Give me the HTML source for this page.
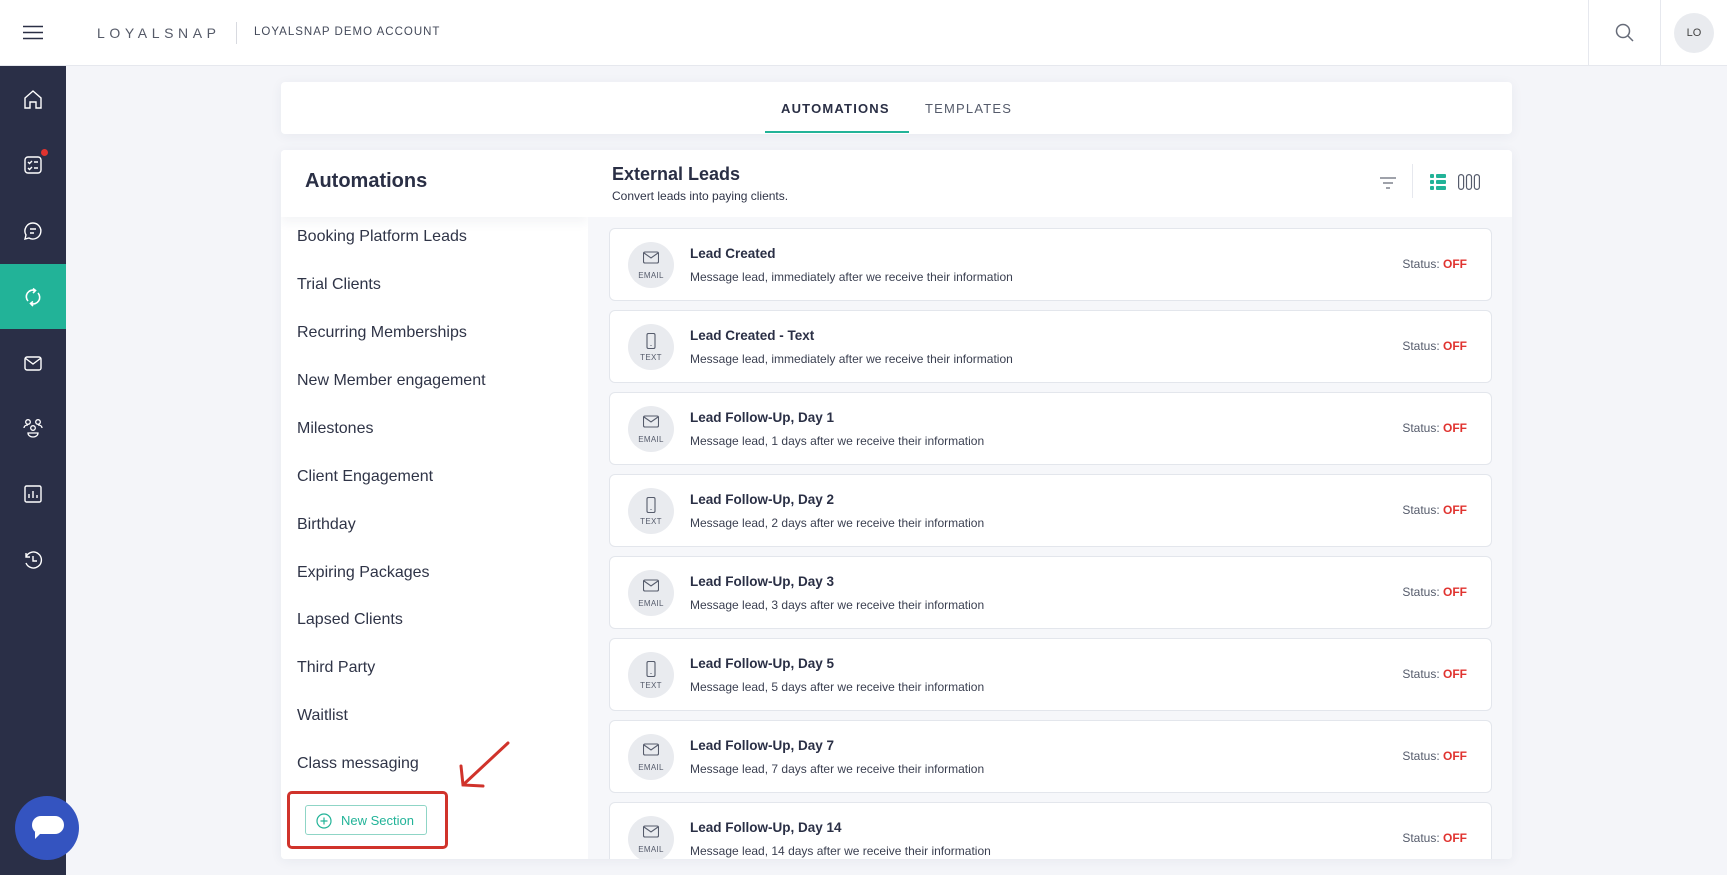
<!DOCTYPE html>
<html><head><meta charset="utf-8"><style>
*{box-sizing:border-box;margin:0;padding:0}
body{width:1727px;height:875px;overflow:hidden;background:#f4f5f9;font-family:"Liberation Sans",sans-serif;color:#2a2f45;position:relative}
.hdr{position:absolute;left:0;top:0;width:1727px;height:66px;background:#fff;border-bottom:1px solid #e6e8ee}
.side{position:absolute;left:0;top:66px;width:66px;height:809px;background:#2a2f47}
.side svg{position:absolute;left:22px}
.abs{position:absolute}
.card{position:absolute;background:#fff;border-radius:4px;box-shadow:0 2px 12px rgba(40,50,90,.06)}
.item{position:absolute;left:16px;font-size:16px;color:#2f3447}
.row{position:absolute;left:21px;width:883px;height:73px;background:#fff;border:1px solid #e3e6ec;border-radius:6px}
.circ{position:absolute;left:18px;top:13px;width:46px;height:46px;border-radius:50%;background:#e9ebef}
.circ span{position:absolute;left:0;width:46px;text-align:center;top:29px;font-size:8px;color:#555b6b;letter-spacing:.3px}
.circ svg{position:absolute;left:15px;top:9px}
.t{position:absolute;left:80px;top:17px;font-size:13.5px;font-weight:bold;color:#2a2f45}
.d{position:absolute;left:80px;top:41px;font-size:12px;color:#3a3f50}
.st{position:absolute;right:24px;top:28px;font-size:12px;color:#555b6b}
.st b{color:#e0332f}
</style></head><body>
<div class="hdr">
 <svg class="abs" style="left:23px;top:25px" width="20" height="15"><path d="M0 1.5H20M0 7.5H20M0 13.5H20" stroke="#2a2f45" stroke-width="1.6"/></svg>
 <div class="abs" style="left:97px;top:25px;font-size:14px;letter-spacing:4.6px;color:#555a68">LOYALSNAP</div>
 <div class="abs" style="left:236px;top:22px;width:1px;height:22px;background:#d8dae0"></div>
 <div class="abs" style="left:254px;top:26px;font-size:11.5px;letter-spacing:1px;color:#444a5a">LOYALSNAP DEMO ACCOUNT</div>
 <div class="abs" style="left:1588px;top:0;width:1px;height:66px;background:#e6e8ee"></div>
 <svg class="abs" style="left:1615px;top:23px" width="20" height="20"><circle cx="8" cy="8" r="6.5" fill="none" stroke="#666b78" stroke-width="1.5"/><path d="M13 13L18 18" stroke="#666b78" stroke-width="1.5"/></svg>
 <div class="abs" style="left:1660px;top:0;width:1px;height:66px;background:#e6e8ee"></div>
 <div class="abs" style="left:1674px;top:13px;width:40px;height:40px;border-radius:50%;background:#e9ebef;font-size:11px;text-align:center;line-height:40px;color:#444">LO</div>
</div>
<div class="side">
 <svg style="top:22px" width="22" height="22" fill="none" stroke="#fff" stroke-width="1.4"><path d="M3 10L11 3L19 10V20H14V14H8V20H3Z"/></svg>
 <svg style="top:88px" width="22" height="22" fill="none" stroke="#fff" stroke-width="1.4"><rect x="3" y="3" width="16" height="16" rx="3"/><path d="M6 8l1.5 1.5L10 7M12 8h4M6 14l1.5 1.5L10 13M12 14h4"/></svg>
 <div class="abs" style="left:41px;top:83px;width:7px;height:7px;border-radius:50%;background:#e0332f"></div>
 <svg style="top:154px" width="22" height="22" fill="none" stroke="#fff" stroke-width="1.4"><path d="M11 3a8 8 0 1 1-4 15L3 19l1-4A8 8 0 0 1 11 3z"/><path d="M8 9h6M8 13h4"/></svg>
 <div class="abs" style="left:0;top:198px;width:66px;height:65px;background:#22b398"></div>
 <svg style="top:220px" width="22" height="22" fill="none" stroke="#fff" stroke-width="1.6"><path d="M6 15A6.5 6.5 0 0 1 13 4.5M16 7A6.5 6.5 0 0 1 9 17.5"/><path d="M11 2.5l2.5 2-2.5 2.5M11 15.5l-2.5 2 2.5 2.5"/></svg>
 <svg style="top:286px" width="22" height="22" fill="none" stroke="#fff" stroke-width="1.4"><rect x="3" y="5" width="16" height="13" rx="2"/><path d="M3 6l8 6 8-6"/></svg>
 <svg style="top:351px" width="22" height="22" fill="none" stroke="#fff" stroke-width="1.3"><circle cx="6" cy="5" r="2.3"/><circle cx="16" cy="5" r="2.3"/><circle cx="11" cy="11" r="2.3"/><path d="M2 11c0-2 2-3 4-3M20 11c0-2-2-3-4-3M6 16h10a5 4 0 0 1-10 0z"/></svg>
 <svg style="top:417px" width="22" height="22" fill="none" stroke="#fff" stroke-width="1.4"><rect x="3" y="3" width="16" height="16" rx="1.5"/><path d="M7 15v-4M11 15v-7M15 15v-3"/></svg>
 <svg style="top:483px" width="22" height="22" fill="none" stroke="#fff" stroke-width="1.4"><path d="M4 8A8 8 0 1 1 4 14M4 4v4h4M11 7v5h4"/></svg>
</div>
<div class="abs" style="left:15px;top:796px;width:64px;height:64px;border-radius:50%;background:#3454c0"></div>
<div class="abs" style="left:32px;top:816px;width:32px;height:18px;border-radius:9px;background:#fff"></div>
<svg class="abs" style="left:35px;top:832px" width="8" height="8"><path d="M0 0H7L0 7Z" fill="#fff"/></svg>

<div class="card" style="left:281px;top:82px;width:1231px;height:52px">
 <div class="abs" style="left:500px;top:19px;font-size:13px;font-weight:bold;letter-spacing:1.2px;color:#2a2f45">AUTOMATIONS</div>
 <div class="abs" style="left:484px;top:49px;width:144px;height:2px;background:#22b398"></div>
 <div class="abs" style="left:644px;top:19px;font-size:13px;letter-spacing:1.2px;color:#555b6b">TEMPLATES</div>
</div>

<div class="card" style="left:281px;top:150px;width:1231px;height:709px;overflow:hidden">
 <div class="abs" style="left:0;top:0;width:307px;height:709px;background:#fff">
  <div class="abs" style="left:0;top:0;width:307px;height:67px;box-shadow:0 6px 10px rgba(40,50,90,.05);background:#fff"></div>
  <div class="abs" style="left:24px;top:20px;font-size:20px;font-weight:bold;color:#2a2f45">Automations</div>
  <div class="item" style="top:78px">Booking Platform Leads</div>
  <div class="item" style="top:126px">Trial Clients</div>
  <div class="item" style="top:174px">Recurring Memberships</div>
  <div class="item" style="top:222px">New Member engagement</div>
  <div class="item" style="top:270px">Milestones</div>
  <div class="item" style="top:318px">Client Engagement</div>
  <div class="item" style="top:366px">Birthday</div>
  <div class="item" style="top:414px">Expiring Packages</div>
  <div class="item" style="top:461px">Lapsed Clients</div>
  <div class="item" style="top:509px">Third Party</div>
  <div class="item" style="top:557px">Waitlist</div>
  <div class="item" style="top:605px">Class messaging</div>
  <div class="abs" style="left:24px;top:655px;width:122px;height:30px;border:1px solid #8fd5c6;border-radius:3px;color:#22b398;font-size:13px">
   <svg class="abs" style="left:10px;top:7px" width="16" height="16" fill="none" stroke="#22b398" stroke-width="1.2"><circle cx="8" cy="8" r="7"/><path d="M8 4.5v7M4.5 8h7"/></svg>
   <span class="abs" style="left:35px;top:7px">New Section</span>
  </div>
  <div class="abs" style="left:6px;top:641px;width:161px;height:58px;border:3px solid #d0332b;border-radius:5px"></div>
 </div>
 <div class="abs" style="left:307px;top:0;width:924px;height:709px;background:#f6f7fa">
  <div class="abs" style="left:0;top:0;width:924px;height:67px;background:#fff"></div>
  <div class="abs" style="left:24px;top:14px;font-size:18px;font-weight:bold;color:#2a2f45">External Leads</div>
  <div class="abs" style="left:24px;top:39px;font-size:12px;color:#2f3447">Convert leads into paying clients.</div>
  <svg class="abs" style="left:792px;top:26px" width="16" height="14" stroke="#666b78" stroke-width="1.3"><path d="M0 2H16M3 7H13M6 12H10"/></svg>
  <div class="abs" style="left:824px;top:14px;width:1px;height:34px;background:#e6e8ee"></div>
  <svg class="abs" style="left:842px;top:24px" width="16" height="16" fill="#22b398"><rect x="0" y="0" width="4" height="4" rx="1"/><rect x="6" y="0" width="10" height="4" rx="1"/><rect x="0" y="6" width="4" height="4" rx="1"/><rect x="6" y="6" width="10" height="4" rx="1"/><rect x="0" y="12" width="4" height="4" rx="1"/><rect x="6" y="12" width="10" height="4" rx="1"/></svg>
  <svg class="abs" style="left:870px;top:24px" width="22" height="16" fill="none" stroke="#555b6b" stroke-width="1.2"><rect x=".6" y=".6" width="5" height="14.8" rx="2.5"/><rect x="8.5" y=".6" width="5" height="14.8" rx="2.5"/><rect x="16.4" y=".6" width="5" height="14.8" rx="2.5"/></svg>

  <div class="row" style="top:78px"><div class="circ"><svg width="16" height="14" fill="none" stroke="#555b6b" stroke-width="1.1"><rect x=".5" y="1" width="15" height="11" rx="1.5"/><path d="M1 2l7 5 7-5"/></svg><span>EMAIL</span></div><div class="t">Lead Created</div><div class="d">Message lead, immediately after we receive their information</div><div class="st">Status: <b>OFF</b></div></div>
  <div class="row" style="top:160px"><div class="circ"><svg width="16" height="16" fill="none" stroke="#555b6b" stroke-width="1.1"><rect x="4" y=".5" width="8" height="15" rx="1.5"/><path d="M7.5 12.5h1"/></svg><span>TEXT</span></div><div class="t">Lead Created - Text</div><div class="d">Message lead, immediately after we receive their information</div><div class="st">Status: <b>OFF</b></div></div>
  <div class="row" style="top:242px"><div class="circ"><svg width="16" height="14" fill="none" stroke="#555b6b" stroke-width="1.1"><rect x=".5" y="1" width="15" height="11" rx="1.5"/><path d="M1 2l7 5 7-5"/></svg><span>EMAIL</span></div><div class="t">Lead Follow-Up, Day 1</div><div class="d">Message lead, 1 days after we receive their information</div><div class="st">Status: <b>OFF</b></div></div>
  <div class="row" style="top:324px"><div class="circ"><svg width="16" height="16" fill="none" stroke="#555b6b" stroke-width="1.1"><rect x="4" y=".5" width="8" height="15" rx="1.5"/><path d="M7.5 12.5h1"/></svg><span>TEXT</span></div><div class="t">Lead Follow-Up, Day 2</div><div class="d">Message lead, 2 days after we receive their information</div><div class="st">Status: <b>OFF</b></div></div>
  <div class="row" style="top:406px"><div class="circ"><svg width="16" height="14" fill="none" stroke="#555b6b" stroke-width="1.1"><rect x=".5" y="1" width="15" height="11" rx="1.5"/><path d="M1 2l7 5 7-5"/></svg><span>EMAIL</span></div><div class="t">Lead Follow-Up, Day 3</div><div class="d">Message lead, 3 days after we receive their information</div><div class="st">Status: <b>OFF</b></div></div>
  <div class="row" style="top:488px"><div class="circ"><svg width="16" height="16" fill="none" stroke="#555b6b" stroke-width="1.1"><rect x="4" y=".5" width="8" height="15" rx="1.5"/><path d="M7.5 12.5h1"/></svg><span>TEXT</span></div><div class="t">Lead Follow-Up, Day 5</div><div class="d">Message lead, 5 days after we receive their information</div><div class="st">Status: <b>OFF</b></div></div>
  <div class="row" style="top:570px"><div class="circ"><svg width="16" height="14" fill="none" stroke="#555b6b" stroke-width="1.1"><rect x=".5" y="1" width="15" height="11" rx="1.5"/><path d="M1 2l7 5 7-5"/></svg><span>EMAIL</span></div><div class="t">Lead Follow-Up, Day 7</div><div class="d">Message lead, 7 days after we receive their information</div><div class="st">Status: <b>OFF</b></div></div>
  <div class="row" style="top:652px"><div class="circ"><svg width="16" height="14" fill="none" stroke="#555b6b" stroke-width="1.1"><rect x=".5" y="1" width="15" height="11" rx="1.5"/><path d="M1 2l7 5 7-5"/></svg><span>EMAIL</span></div><div class="t">Lead Follow-Up, Day 14</div><div class="d">Message lead, 14 days after we receive their information</div><div class="st">Status: <b>OFF</b></div></div>
 </div>
</div>
<svg class="abs" style="left:455px;top:738px" width="62" height="54" fill="none" stroke="#d0332b" stroke-width="3" stroke-linecap="round"><path d="M53 5L9 46M6 28L8 47L28 48"/></svg>
</body></html>
